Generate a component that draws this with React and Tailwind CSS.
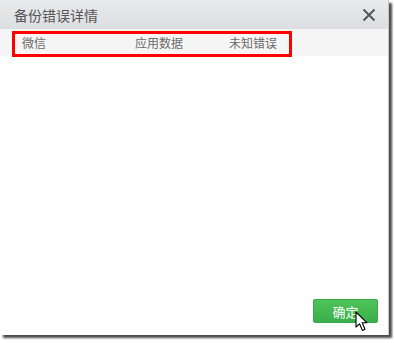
export default function App() {
  const cjk = { fontFamily: '"Noto Sans CJK SC", "Noto Sans", sans-serif' };
  return (
    <div className="w-[394px] h-[343px] bg-white" style={cjk}>
      <div className="relative w-[389px] h-[335px] bg-white flex flex-col shadow-[3px_3px_2px_rgba(0,0,0,0.7)] border-r border-[#c9c9c9]">
        <div className="h-[29px] flex items-center justify-between pl-[14px] pr-[12px] bg-gradient-to-b from-[#e9eaec] to-[#dcdee1]">
          <span className="text-[14px] text-[#555] leading-none">备份错误详情</span>
          <svg width="14" height="14" viewBox="0 0 14 14">
            <path d="M1.5 1.5 L12.5 12.5 M12.5 1.5 L1.5 12.5" stroke="#555" strokeWidth="2" />
          </svg>
        </div>
        <div className="h-[27px] bg-[#f5f5f5] flex items-center text-[12px] text-[#6a6a6a] leading-none">
          <span className="ml-[22px] w-[113px]">微信</span>
          <span className="w-[94px]">应用数据</span>
          <span>未知错误</span>
        </div>
        <div className="flex-1 flex items-end justify-end pr-[10px] pb-[12px]">
          <button className="w-[65px] h-[24px] rounded-[2px] bg-gradient-to-b from-[#4fc35c] to-[#3aae48] border border-[#39a846] text-white text-[13px] leading-none">
            确定
          </button>
        </div>
        <div className="absolute left-[12px] top-[31px] w-[280px] h-[26px] border-[3px] border-[#ff0000]" />
        <svg className="absolute left-[355px] top-[311px]" width="16" height="22" viewBox="0 0 16 22">
          <path d="M1 1 L1 16 L4.5 12.8 L7.5 19.5 L10 18.3 L7.2 11.8 L12 11.8 Z" fill="#fff" stroke="#000" strokeWidth="1.1" strokeLinejoin="round" />
        </svg>
      </div>
    </div>
  );
}
